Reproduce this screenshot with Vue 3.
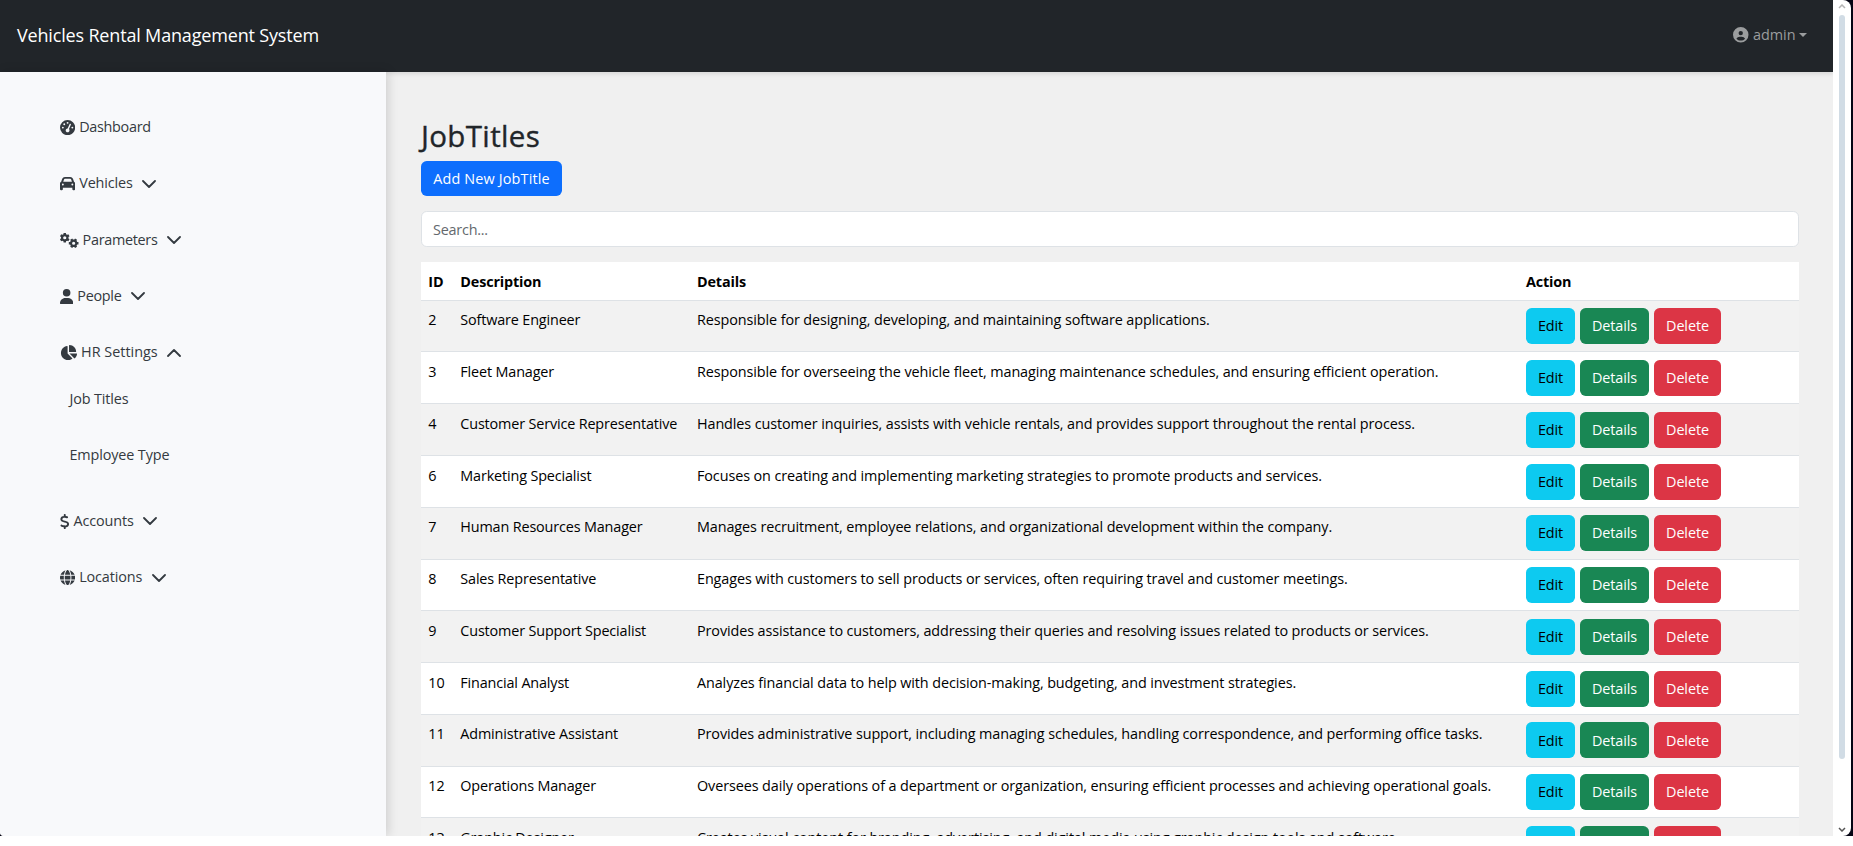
<script setup>
const gear = (cx, cy, r, turn) => {
  const pts = []
  for (let i = 0; i < 6; i++) {
    const base = turn + (i * Math.PI) / 3
    for (const [offset, radius] of [[-0.34, 0.76], [-0.24, 1], [0.24, 1], [0.34, 0.76]]) {
      pts.push(`${(cx + Math.cos(base + offset) * r * radius).toFixed(1)} ${(cy + Math.sin(base + offset) * r * radius).toFixed(1)}`)
    }
  }
  const h = r * 0.32
  return `M${pts.join('L')}ZM${cx - h} ${cy}a${h} ${h} 0 1 0 ${2 * h} 0a${h} ${h} 0 1 0 ${-2 * h} 0Z`
}

const icons = {
  gauge: { w: 512, d: 'M0 256a256 256 0 1 1 512 0A256 256 0 1 1 0 256zM288 96a32 32 0 1 0 -64 0 32 32 0 1 0 64 0zM256 416c35.3 0 64-28.7 64-64c0-17.4-6.9-33.1-18.1-44.6L366 161.7c5.3-12.1-.2-26.3-12.3-31.6s-26.3 .2-31.6 12.3L257.9 288c-.6 0-1.3 0-1.9 0c-35.3 0-64 28.7-64 64s28.7 64 64 64zM176 144a32 32 0 1 0 -64 0 32 32 0 1 0 64 0zM96 288a32 32 0 1 0 0-64 32 32 0 1 0 0 64zm352-32a32 32 0 1 0 -64 0 32 32 0 1 0 64 0z' },
  car: { w: 512, d: 'M135.2 117.4L109.1 192H402.9l-26.1-74.6C372.3 104.6 360.2 96 346.6 96H165.4c-13.6 0-25.7 8.6-30.2 21.4zM39.6 196.8L74.8 96.3C88.3 57.8 124.6 32 165.4 32H346.6c40.8 0 77.1 25.8 90.6 64.3l35.2 100.5c23.2 9.6 39.6 32.5 39.6 59.2V400v48c0 17.7-14.3 32-32 32H448c-17.7 0-32-14.3-32-32V400H96v48c0 17.7-14.3 32-32 32H32c-17.7 0-32-14.3-32-32V400 256c0-26.7 16.4-49.6 39.6-59.2zM128 288a32 32 0 1 0 -64 0 32 32 0 1 0 64 0zm288 32a32 32 0 1 0 0-64 32 32 0 1 0 0 64z' },
  gears: { w: 626, d: gear(160, 160, 168, Math.PI / 6) + gear(460, 345, 168, 0) },
  user: { w: 448, d: 'M224 256A128 128 0 1 0 224 0a128 128 0 1 0 0 256zm-45.7 48C79.8 304 0 383.8 0 482.3C0 498.7 13.3 512 29.7 512H418.3c16.4 0 29.7-13.3 29.7-29.7C448 383.8 368.2 304 269.7 304H178.3z' },
  pie: { w: 576, d: 'M304 240V16.6c0-9 7-16.6 16-16.6C443.7 0 544 100.3 544 224c0 9-7.6 16-16.6 16H304zM32 272C32 150.7 122.1 50.3 239 34.3c9.2-1.3 17 6.1 17 15.4V288L412.5 444.5c6.7 6.7 6.2 17.7-1.5 23.1C371.8 495.6 323.8 512 272 512C139.5 512 32 404.6 32 272zm526.4 16c9.3 0 16.6 7.8 15.4 17c-7.7 55.9-34.6 105.6-73.9 142.3c-6 5.6-15.4 5.2-21.2-.7L320 288H558.4z' },
  dollar: { w: 320, d: 'M160 0c17.7 0 32 14.3 32 32V67.7c1.6 .2 3.1 .4 4.7 .7c.4 .1 .7 .1 1.1 .2l48 8.8c17.4 3.2 28.9 19.9 25.7 37.2s-19.9 28.9-37.2 25.7l-47.5-8.7c-31.3-4.6-58.9-1.5-78.3 6.2s-27.2 18.3-29 28.1c-2 10.7-.5 16.7 1.2 20.4c1.8 3.9 5.5 8.3 12.8 13.2c16.3 10.7 41.3 17.7 73.7 26.3l2.9 .8c28.6 7.6 63.6 16.8 89.6 33.8c14.2 9.3 27.6 21.9 35.9 39.5c8.5 17.9 10.3 37.9 6.4 59.2c-6.9 38-33.1 63.4-65.6 76.7c-13.7 5.6-28.6 9.2-44.4 11V480c0 17.7-14.3 32-32 32s-32-14.3-32-32V445.1c-.4-.1-.9-.1-1.3-.2l-.2 0 0 0c-24.4-3.8-64.5-14.3-91.5-26.3c-16.1-7.2-23.4-26.1-16.2-42.2s26.1-23.4 42.2-16.2c20.9 9.3 55.3 18.5 75.2 21.6c31.9 4.7 58.2 2 76-5.3c16.9-6.9 24.6-16.9 26.8-28.9c1.9-10.6 .4-16.7-1.3-20.4c-1.9-4-5.6-8.4-13-13.3c-16.4-10.7-41.5-17.7-74-26.3l-2.8-.7 0 0C119.4 279.3 84.4 270 58.4 253c-14.2-9.3-27.5-22-35.8-39.6c-8.4-17.9-10.1-37.9-6.1-59.2C23.7 116 52.3 91.2 84.8 78.3c13.3-5.3 27.9-8.9 43.2-11V32c0-17.7 14.3-32 32-32z' },
  globe: { w: 512, d: 'M352 256c0 22.2-1.2 43.6-3.3 64H163.3c-2.2-20.4-3.3-41.8-3.3-64s1.2-43.6 3.3-64H348.7c2.2 20.4 3.3 41.8 3.3 64zm28.8-64H503.9c5.3 20.5 8.1 41.9 8.1 64s-2.8 43.5-8.1 64H380.8c2.1-20.6 3.2-42 3.2-64s-1.1-43.4-3.2-64zm112.6-32H376.7c-10-63.9-29.8-117.4-55.3-151.6c78.3 20.7 142 77.5 171.9 151.6zm-149.1 0H167.7c6.1-36.4 15.5-68.6 27-94.7c10.5-23.6 22.2-40.7 33.5-51.5C239.4 3.2 248.7 0 256 0s16.6 3.2 27.8 13.8c11.3 10.8 23 27.9 33.5 51.5c11.6 26 20.9 58.2 27 94.7zm-209 0H18.6C48.6 85.9 112.2 29.1 190.6 8.4C165.1 42.6 145.3 96.1 135.3 160zM8.1 192H131.2c-2.1 20.6-3.2 42-3.2 64s1.1 43.4 3.2 64H8.1C2.8 299.5 0 278.1 0 256s2.8-43.5 8.1-64zM194.7 446.6c-11.6-26-20.9-58.2-27-94.6H344.3c-6.1 36.4-15.5 68.6-27 94.6c-10.5 23.6-22.2 40.7-33.5 51.5C272.6 508.8 263.3 512 256 512s-16.6-3.2-27.8-13.8c-11.3-10.8-23-27.9-33.5-51.5zM135.3 352c10 63.9 29.8 117.4 55.3 151.6C112.2 482.9 48.6 426.1 18.6 352H135.3zm358.1 0c-30 74.1-93.6 130.9-171.9 151.6c25.5-34.2 45.2-87.7 55.3-151.6H493.4z' },
}

const menu = [
  { label: 'Dashboard', icon: icons.gauge, tone: 'tight' },
  { label: 'Vehicles', icon: icons.car, arrow: 'down' },
  { label: 'Parameters', icon: icons.gears, arrow: 'down', tone: 'tight' },
  { label: 'People', icon: icons.user, arrow: 'down', tone: 'tight' },
  { label: 'HR Settings', icon: icons.pie, arrow: 'up', tone: 'loose', children: ['Job Titles', 'Employee Type'] },
  { label: 'Accounts', icon: icons.dollar, arrow: 'down' },
  { label: 'Locations', icon: icons.globe, arrow: 'down' },
]

const jobs = [
  [2, 'Software Engineer', 'Responsible for designing, developing, and maintaining software applications.'],
  [3, 'Fleet Manager', 'Responsible for overseeing the vehicle fleet, managing maintenance schedules, and ensuring efficient operation.'],
  [4, 'Customer Service Representative', 'Handles customer inquiries, assists with vehicle rentals, and provides support throughout the rental process.'],
  [6, 'Marketing Specialist', 'Focuses on creating and implementing marketing strategies to promote products and services.'],
  [7, 'Human Resources Manager', 'Manages recruitment, employee relations, and organizational development within the company.'],
  [8, 'Sales Representative', 'Engages with customers to sell products or services, often requiring travel and customer meetings.'],
  [9, 'Customer Support Specialist', 'Provides assistance to customers, addressing their queries and resolving issues related to products or services.'],
  [10, 'Financial Analyst', 'Analyzes financial data to help with decision-making, budgeting, and investment strategies.'],
  [11, 'Administrative Assistant', 'Provides administrative support, including managing schedules, handling correspondence, and performing office tasks.'],
  [12, 'Operations Manager', 'Oversees daily operations of a department or organization, ensuring efficient processes and achieving operational goals.'],
  [13, 'Graphic Designer', 'Creates visual content for branding, advertising, and digital media using graphic design tools and software.'],
]
</script>

<template>
  <div class="window">
    <div class="page">
      <header class="navbar">
        <a class="brand">Vehicles Rental Management System</a>
        <a class="account">
          <svg class="avatar" viewBox="0 0 512 512"><path d="M399 384.2C376.9 345.8 335.4 320 288 320H224c-47.4 0-88.9 25.8-111 64.2c35.2 39.2 86.2 63.8 143 63.8s107.8-24.7 143-63.8zM0 256a256 256 0 1 1 512 0A256 256 0 1 1 0 256zm256 16a72 72 0 1 0 0-144 72 72 0 1 0 0 144z" /></svg>
          <span>admin</span>
          <i class="caret"></i>
        </a>
      </header>
      <div class="body">
        <nav class="sidebar">
          <template v-for="item in menu" :key="item.label">
            <a class="item" :class="item.tone">
              <svg class="icon" :viewBox="`0 0 ${item.icon.w} 512`" :style="{ width: item.icon.w * 15.2 / 512 + 'px' }"><path fill-rule="evenodd" :d="item.icon.d" /></svg>
              <span>{{ item.label }}</span>
              <svg v-if="item.arrow" class="chevron" :class="item.arrow" viewBox="0 0 14 8"><path d="M1 1l6 6 6-6" /></svg>
            </a>
            <div v-if="item.children" class="children">
              <a v-for="child in item.children" :key="child" class="item">{{ child }}</a>
            </div>
          </template>
        </nav>
        <main class="content">
          <h2>JobTitles</h2>
          <button class="btn primary">Add New JobTitle</button>
          <input class="search" type="text" placeholder="Search..." />
          <div class="table">
            <div class="row head">
              <span>ID</span><span>Description</span><span>Details</span><span>Action</span>
            </div>
            <div v-for="[id, title, details] in jobs" :key="id" class="row">
              <span>{{ id }}</span>
              <span>{{ title }}</span>
              <span class="details">{{ details }}</span>
              <div class="actions">
                <button class="btn info">Edit</button>
                <button class="btn success">Details</button>
                <button class="btn danger">Delete</button>
              </div>
            </div>
          </div>
        </main>
      </div>
    </div>
    <div class="scrollbar">
      <svg class="arrow" viewBox="0 0 8 5"><path d="M1 4l3-3 3 3" stroke="#b4b4b4" /></svg>
      <div class="track"><div class="thumb"></div></div>
      <svg class="arrow" viewBox="0 0 8 5"><path d="M1 1l3 3 3-3" stroke="#555" /></svg>
    </div>
  </div>
</template>

<style>
body { background: #fff; overflow: hidden; }
</style>

<style scoped>
* { box-sizing: border-box; }
.window {
  display: flex;
  width: 1853px;
  height: 836px;
  padding-right: 2px;
  overflow: hidden;
  background: #050514;
  font: 14.4px/22.8px "Open Sans", "Noto Sans", sans-serif;
  color: #000;
}
.page {
  display: flex;
  flex-direction: column;
  width: 1833px;
  height: 836px;
  overflow: hidden;
  background: #f0f0f0;
  border-bottom-left-radius: 4px;
}
.navbar {
  display: flex;
  flex: none;
  justify-content: space-between;
  align-items: center;
  height: 72px;
  padding: 0 26px 2px 17px;
  background: #212529;
  box-shadow: 0 2px 4px rgba(0, 0, 0, .1);
  z-index: 1;
}
.brand { color: #fff; font-size: 18px; letter-spacing: -.17px; }
.account { display: flex; align-items: center; color: #9b9d9e; }
.avatar { width: 15.5px; height: 15.5px; margin-right: 4px; fill: currentColor; }
.caret { margin-left: 3.5px; border: 4px solid transparent; border-top-color: currentColor; border-bottom: 0; }
.body { display: flex; flex: 1; min-height: 0; }
.sidebar {
  flex: none;
  width: 386px;
  padding: 26.5px 0 0 60px;
  background: #f8f9fb;
  color: #343a40;
  box-shadow: 2px 0 10px rgba(0, 0, 0, .15);
  z-index: 2;
}
.item { display: flex; align-items: center; height: 56.25px; padding-top: 2px; letter-spacing: -.13px; }
.item.tight { letter-spacing: -.3px; }
.item.loose { letter-spacing: 0; }
.icon { height: 15.2px; margin-right: 4px; fill: #343a40; }
.chevron { width: 14px; height: 8px; margin-left: 9.5px; fill: none; stroke: #343a40; stroke-width: 1.8; stroke-linecap: round; stroke-linejoin: round; }
.chevron.up { transform: rotate(180deg); }
.children { margin: -9.5px 0 9.5px; padding-left: 9.5px; }
.content { flex: 1; min-width: 0; padding: 46px 34px 0 35px; }
h2 {
  margin: 0 0 7px;
  font-size: 29.5px;
  line-height: 36px;
  font-weight: 500;
  color: #212529;
  letter-spacing: .35px;
  -webkit-text-stroke: .35px #212529;
}
.btn {
  display: block;
  height: 36px;
  padding: 1px 0 0;
  border: 0;
  border-radius: 5.7px;
  color: #fff;
  font: inherit;
  text-align: center;
  letter-spacing: -.1px;
}
.primary { width: 141px; height: 35px; background: #0d6efd; letter-spacing: .17px; }
.search {
  display: block;
  width: 100%;
  height: 36px;
  margin: 15px 0;
  padding: 1px 11px 0;
  border: 1px solid #dee2e6;
  border-radius: 5.7px;
  background: #fff;
  font: inherit;
  letter-spacing: -.22px;
}
.search::placeholder { color: #63686d; }
.row {
  display: grid;
  grid-template-columns: 32px 236.7px 829px 1fr;
  height: 51.77px;
  padding: 7.6px 7.3px 0;
  border-bottom: 1px solid #dee2e6;
  background: #fff;
  letter-spacing: -.15px;
  white-space: nowrap;
}
.row > span { padding-top: 1px; }
.details { letter-spacing: -.1px; }
.row:nth-child(even) { background: #f2f2f2; }
.row.head { height: 38.7px; font-weight: 700; }
.row.head > span { padding-top: 1.5px; }
.actions { display: flex; gap: 5px; }
.info { width: 49px; background: #0dcaf0; color: #000; }
.success { width: 69px; background: #198754; }
.danger { width: 67px; background: #dc3545; }
.scrollbar {
  display: flex;
  flex-direction: column;
  align-items: center;
  width: 18px;
  padding: 4px 0 4px;
  background: #fff;
  border-radius: 0 8px 8px 0;
}
.arrow { width: 8px; height: 5px; fill: none; stroke-width: 1.5; }
.track { flex: 1; padding-top: 6px; }
.thumb { width: 6px; height: 744px; border-radius: 3px; background: #d1dce5; }
</style>
